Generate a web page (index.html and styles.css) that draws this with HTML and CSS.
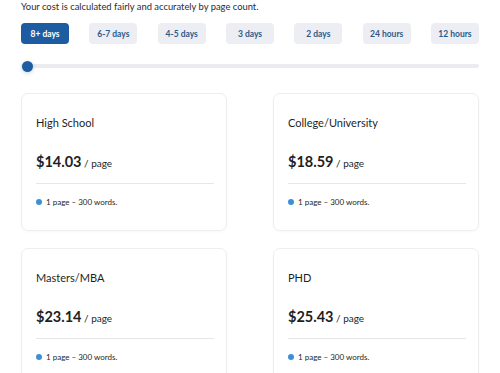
FILE: index.html
```html
<!DOCTYPE html>
<html lang="en">
<head>
	<meta charset="UTF-8">
	<title>pricing</title>
	<link rel="stylesheet" href="styles.css">
</head>
<body>
	<div class="wrap">
		<p class="lead">Your cost is calculated fairly and accurately by page count.</p>

		<div class="deadlines">
			<button class="dl act">8+ days</button>
			<button class="dl">6-7 days</button>
			<button class="dl">4-5 days</button>
			<button class="dl">3 days</button>
			<button class="dl">2 days</button>
			<button class="dl">24 hours</button>
			<button class="dl">12 hours</button>
		</div>

		<div class="slider">
			<span class="knob"></span>
		</div>

		<div class="cards">
			<div class="card">
				<h3>High School</h3>
				<p class="price"><b>$14.03</b> / page</p>
				<p class="note">1 page – 300 words.</p>
			</div>
			<div class="card">
				<h3>College/University</h3>
				<p class="price"><b>$18.59</b> / page</p>
				<p class="note">1 page – 300 words.</p>
			</div>
			<div class="card">
				<h3>Masters/MBA</h3>
				<p class="price"><b>$23.14</b> / page</p>
				<p class="note">1 page – 300 words.</p>
			</div>
			<div class="card">
				<h3>PHD</h3>
				<p class="price"><b>$25.43</b> / page</p>
				<p class="note">1 page – 300 words.</p>
			</div>
		</div>
	</div>
</body>
</html>
```

FILE: styles.css
```css
html, body {
	margin: 0;
	padding: 0;
	background: #fff;
}

body {
	font-family: Lato, "Liberation Sans", sans-serif;
	color: #1d1f24;
}

.wrap {
	padding: 0 21px;
	overflow: hidden;
	height: 373px;
}

.lead {
	margin: 0;
	padding-top: 1px;
	font-size: 9.4px;
	line-height: 12px;
	color: #2a2c31;
}

.deadlines {
	display: flex;
	justify-content: space-between;
	margin-top: 10px;
}
.dl {
	width: 48px;
	height: 21px;
	padding: 0;
	border: none;
	border-radius: 4px;
	background: #eceef3;
	color: #2d5b8c;
	font-family: inherit;
	font-size: 8.5px;
	font-weight: 700;
	cursor: pointer;
}
.dl.act {
	background: #1d5ca1;
	color: #fff;
}

.slider {
	position: relative;
	height: 4px;
	margin-top: 20px;
	border-radius: 2px;
	background: #ebecf0;
}
.knob {
	position: absolute;
	left: 1px;
	top: 50%;
	width: 11px;
	height: 11px;
	margin-top: -5.5px;
	border-radius: 50%;
	background: #1d5ca1;
	box-shadow: 0 1px 4px rgba(29,92,161,.25);
}

.cards {
	display: grid;
	grid-template-columns: 1fr 1fr;
	column-gap: 46px;
	row-gap: 17px;
	margin-top: 25px;
}
.card {
	height: 138px;
	box-sizing: border-box;
	padding: 22px 12px 0 14px;
	border: 1px solid #eeeef0;
	border-radius: 7px;
	box-shadow: 0 1px 3px rgba(0,0,0,.03);
}
.card h3 {
	margin: 0;
	font-size: 11px;
	line-height: 14px;
	font-weight: 400;
}
.price {
	margin: 23px 0 0;
	padding-bottom: 11px;
	border-bottom: 1px solid #e6e7ea;
	font-size: 10px;
	line-height: 18px;
}
.price b {
	font-size: 14.5px;
	font-weight: 700;
}
.note {
	display: flex;
	align-items: center;
	gap: 4px;
	margin: 13px 0 0;
	font-size: 8px;
	line-height: 10px;
}
.note::before {
	content: "";
	width: 6px;
	height: 6px;
	border-radius: 50%;
	background: #3b90da;
}
```
